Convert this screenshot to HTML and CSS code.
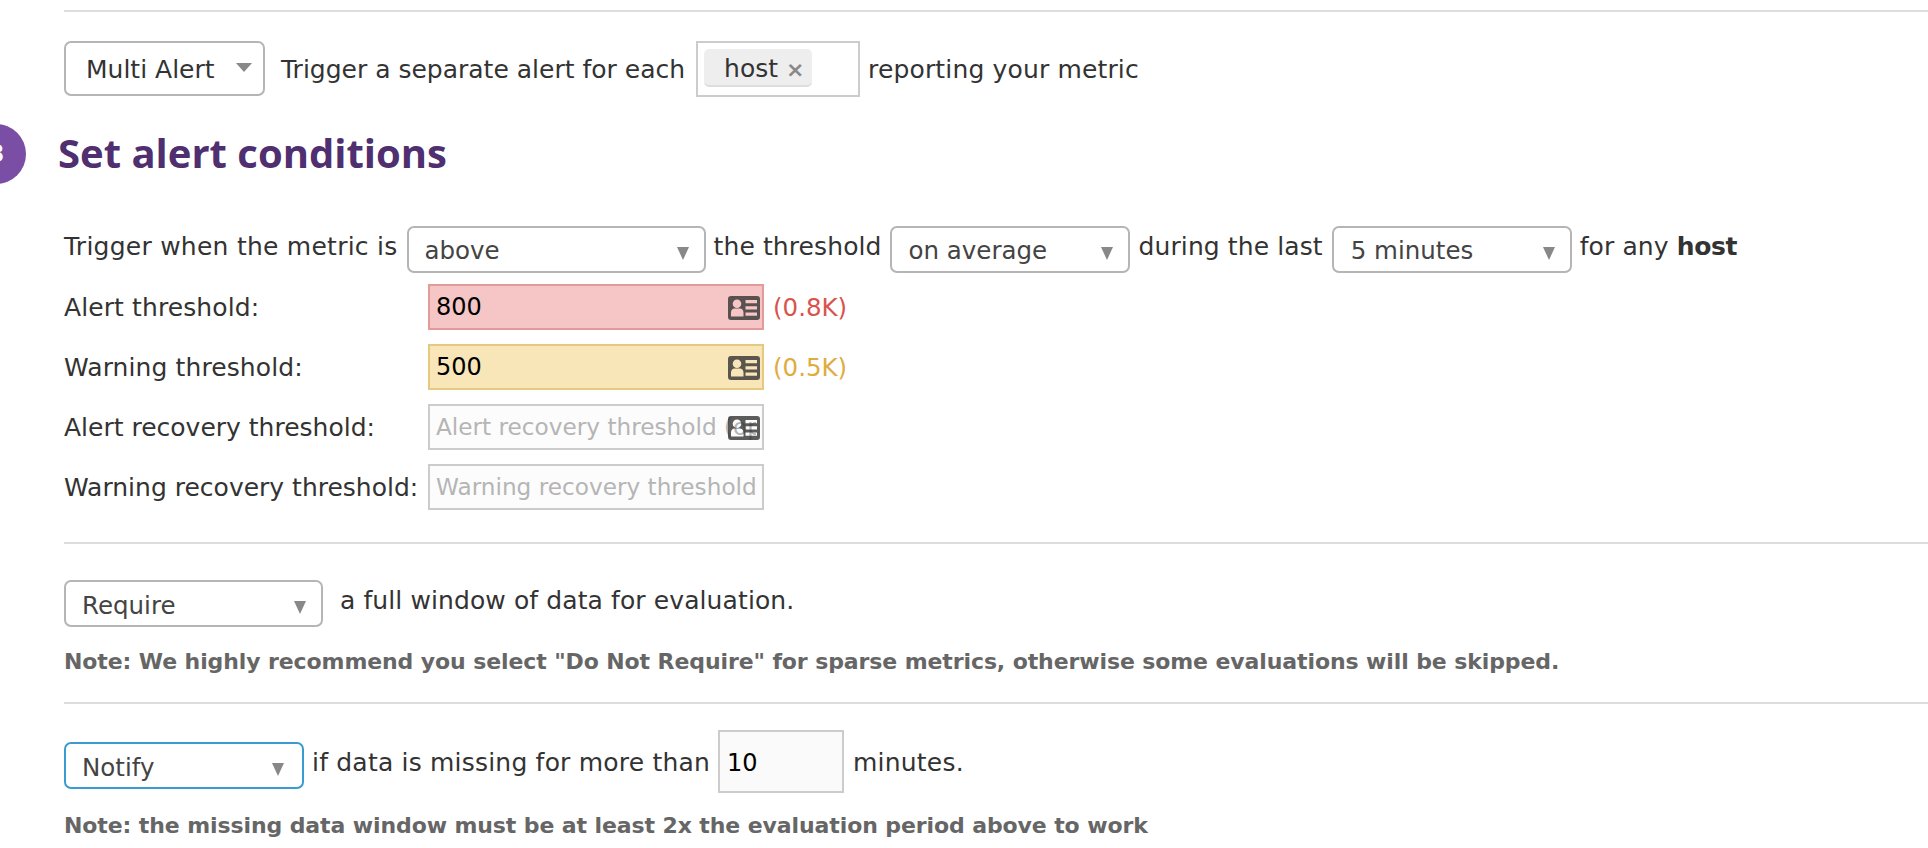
FILE: index.html
```html
<!DOCTYPE html>
<html lang="en">
<head>
    <meta charset="UTF-8">
    <title>Set alert conditions</title>
    <link rel="stylesheet" href="styles.css">
</head>
<body>
    <div class="page">
        <hr class="rule first">

        <!-- Multi alert -->
        <div class="row multi-row">
            <div class="select multi-select">Multi Alert<span class="caret caret-wide"></span></div>
            <span class="text">Trigger a separate alert for each</span>
            <div class="tag-box"><span class="tag">host <span class="tag-x">&times;</span></span></div>
            <span class="text metric-text">reporting your metric</span>
        </div>

        <!-- Step 3 -->
        <div class="step-head">
            <span class="step-num">3</span>
            <h2>Set alert conditions</h2>
        </div>

        <div class="row trigger-row">
            <span class="text up trigger-label">Trigger when the metric is</span>
            <div class="select above-select">above<span class="caret"></span></div>
            <span class="text up">the threshold</span>
            <div class="select small-select">on average<span class="caret"></span></div>
            <span class="text up">during the last</span>
            <div class="select small-select">5 minutes<span class="caret"></span></div>
            <span class="text up">for any <b>host</b></span>
        </div>

        <div class="thresholds">
            <label class="text">Alert threshold:</label>
            <div class="field">
                <input class="alert-input" type="text" value="800">
                <svg class="card-icon" viewBox="0 0 32 24"><use href="#card"></use></svg>
            </div>
            <span class="value alert-value">(0.8K)</span>

            <label class="text">Warning threshold:</label>
            <div class="field">
                <input class="warn-input" type="text" value="500">
                <svg class="card-icon" viewBox="0 0 32 24"><use href="#card"></use></svg>
            </div>
            <span class="value warn-value">(0.5K)</span>

            <label class="text tight">Alert recovery threshold:</label>
            <div class="field">
                <input type="text" placeholder="Alert recovery threshold (optional)">
                <svg class="card-icon" viewBox="0 0 32 24"><use href="#card"></use></svg>
            </div>
            <span></span>

            <label class="text tight">Warning recovery threshold:</label>
            <div class="field">
                <input type="text" placeholder="Warning recovery threshold">
            </div>
            <span></span>
        </div>

        <hr class="rule rule-two">

        <div class="row require-row">
            <div class="select require-select">Require<span class="caret"></span></div>
            <span class="text up">a full window of data for evaluation.</span>
        </div>
        <p class="note note-one">Note: We highly recommend you select "Do Not Require" for sparse metrics, otherwise some evaluations will be skipped.</p>

        <hr class="rule rule-three">

        <div class="row notify-row">
            <div class="select notify-select">Notify<span class="caret"></span></div>
            <span class="text">if data is missing for more than</span>
            <input class="minutes" type="text" value="10">
            <span class="text">minutes.</span>
        </div>
        <p class="note note-two">Note: the missing data window must be at least 2x the evaluation period above to work</p>
    </div>

    <svg class="defs" width="0" height="0">
        <symbol id="card" viewBox="0 0 32 24">
            <path fill-rule="evenodd" d="M3 0h26a3 3 0 0 1 3 3v18a3 3 0 0 1-3 3H3a3 3 0 0 1-3-3V3a3 3 0 0 1 3-3zM9 3.500a4.300 4.300 0 1 0 0 8.600a4.300 4.300 0 0 0 0-8.600zM3 20.500h12.500v-4c0-2.600-1.800-4-3.500-4H6.500c-1.700 0-3.500 1.400-3.500 4zM17.500 4v3.200h11.500V4zM17.500 10.300v3.200h11.500v-3.200zM17.500 16.600v3.200h11.500v-3.200z"/>
        </symbol>
    </svg>
</body>
</html>
```

FILE: styles.css
```css
/* General Styles */
html, body {
    margin: 0;
    padding: 0;
    background: #fff;
    overflow: hidden;
}

body {
    font-family: 'DejaVu Sans', sans-serif;
    font-size: 25px;
    letter-spacing: 0.1px;
    color: #333;
    height: 848px;
}

.page {
    padding-left: 64px;
}

.defs {
    position: absolute;
}

.rule {
    border: none;
    height: 2px;
    margin: 0;
    background: #ddd;
}

.first { margin-top: 10px; }
.rule-two { margin-top: 32px; }
.rule-three { margin-top: 25px; }

.row {
    display: flex;
    align-items: center;
}

.text {
    white-space: nowrap;
}

.tight {
    letter-spacing: 0;
}

.up {
    position: relative;
    top: -3px;
}

/* Fake select boxes */
.select {
    position: relative;
    box-sizing: border-box;
    height: 47px;
    line-height: 47px;
    padding-left: 16px;
    border: 2px solid #b5b5b5;
    border-radius: 7px;
    background: #fff;
    color: #444;
    font-size: 24.5px;
    letter-spacing: 0;
    white-space: nowrap;
    flex: none;
}

.caret {
    position: absolute;
    right: 15px;
    top: 19px;
    width: 0;
    height: 0;
    border-left: 6px solid transparent;
    border-right: 6px solid transparent;
    border-top: 13px solid #888;
}

.caret-wide {
    right: 11px;
    top: 20px;
    border-left-width: 8px;
    border-right-width: 8px;
    border-top-width: 9px;
}

/* Multi alert row */
.multi-row {
    margin-top: 29px;
    height: 56px;
    letter-spacing: 0;
}

.metric-text {
    letter-spacing: 0.15px;
}

.multi-select {
    width: 201px;
    height: 55px;
    line-height: 53px;
    padding-left: 20px;
    margin-right: 16px;
    margin-top: -2px;
    color: #333;
    font-size: 25px;
}

.tag-box {
    box-sizing: border-box;
    width: 164px;
    height: 56px;
    margin: 0 8px 0 11px;
    padding: 6px;
    border: 2px solid #ccc;
}

.tag {
    display: block;
    box-sizing: border-box;
    width: 108px;
    height: 38px;
    line-height: 39px;
    padding-left: 20px;
    background: #eee;
    border-bottom: 2px solid #ddd;
    border-radius: 5px;
}

.tag-x {
    color: #888;
    font-weight: bold;
    font-size: 22px;
}

/* Step heading */
.step-head {
    position: relative;
    margin-top: 27px;
    height: 60px;
}

.step-num {
    position: absolute;
    left: -98px;
    top: 0;
    width: 60px;
    height: 60px;
    line-height: 60px;
    border-radius: 50%;
    background: #7a4ea5;
    color: #fff;
    text-align: center;
    font-weight: bold;
}

h2 {
    margin: 0 0 0 -6px;
    font-family: 'Open Sans', sans-serif;
    font-size: 40px;
    line-height: 58px;
    font-weight: 700;
    letter-spacing: 0;
    color: #4f2f70;
}

/* Trigger row */
.trigger-row {
    margin-top: 42px;
    height: 47px;
}

.trigger-row .select {
    line-height: 45px;
}

.trigger-label {
    letter-spacing: 0.25px;
}

.trigger-row b {
    letter-spacing: -0.4px;
}

.above-select {
    width: 299px;
    margin: 0 8px 0 9px;
}

.small-select {
    width: 240px;
    padding-left: 17px;
    margin: 0 9px 0 8px;
}

.small-select + .text + .small-select {
    margin-left: 9px;
    margin-right: 8px;
}

/* Thresholds */
.thresholds {
    display: grid;
    grid-template-columns: 364px 336px auto;
    grid-auto-rows: 46px;
    row-gap: 14px;
    align-items: center;
    margin-top: 11px;
}

.field {
    position: relative;
    height: 46px;
}

.field input {
    box-sizing: border-box;
    width: 336px;
    height: 46px;
    padding: 0 6px;
    border: 2px solid #ccc;
    background: #fcfcfc;
    font-family: inherit;
    font-size: 24px;
    color: #000;
    outline: none;
}

.field input::placeholder {
    color: #b5b5b5;
    opacity: 1;
    font-size: 23.2px;
}

.field .alert-input {
    background: #f5c6c5;
    border-color: #e19b98;
}

.field .warn-input {
    background: #f8e6b8;
    border-color: #e5c97f;
}

.card-icon {
    position: absolute;
    right: 4px;
    top: 12px;
    width: 32px;
    height: 24px;
    fill: #333;
    opacity: 0.8;
}

.value {
    padding-left: 9px;
    font-size: 24.5px;
    letter-spacing: 0;
}

.alert-value { color: #d9534f; }
.warn-value { color: #e0ac3f; }

/* Require row */
.require-row {
    margin-top: 36px;
}

.require-select {
    width: 259px;
    margin-right: 17px;
}

/* Notes */
.note {
    margin: 0;
    font-size: 22px;
    line-height: 30px;
    font-weight: bold;
    letter-spacing: -0.1px;
    color: #666;
    white-space: nowrap;
}

.note-one { margin-top: 20px; }
.note-two { margin-top: 18px; }

/* Notify row */
.notify-row {
    margin-top: 26px;
    height: 63px;
    letter-spacing: 0.2px;
}

.notify-row .text {
    padding-top: 2px;
}

.notify-select {
    width: 240px;
    margin: 8px 8px 0 0;
    border-color: #3a9bd0;
}

.notify-select .caret {
    right: 18px;
}

.minutes {
    box-sizing: border-box;
    width: 126px;
    height: 63px;
    margin: 0 9px 0 8px;
    padding: 2px 7px 0;
    border: 2px solid #ccc;
    background: #fafafa;
    font-family: inherit;
    font-size: 24px;
    color: #000;
    outline: none;
}
```
